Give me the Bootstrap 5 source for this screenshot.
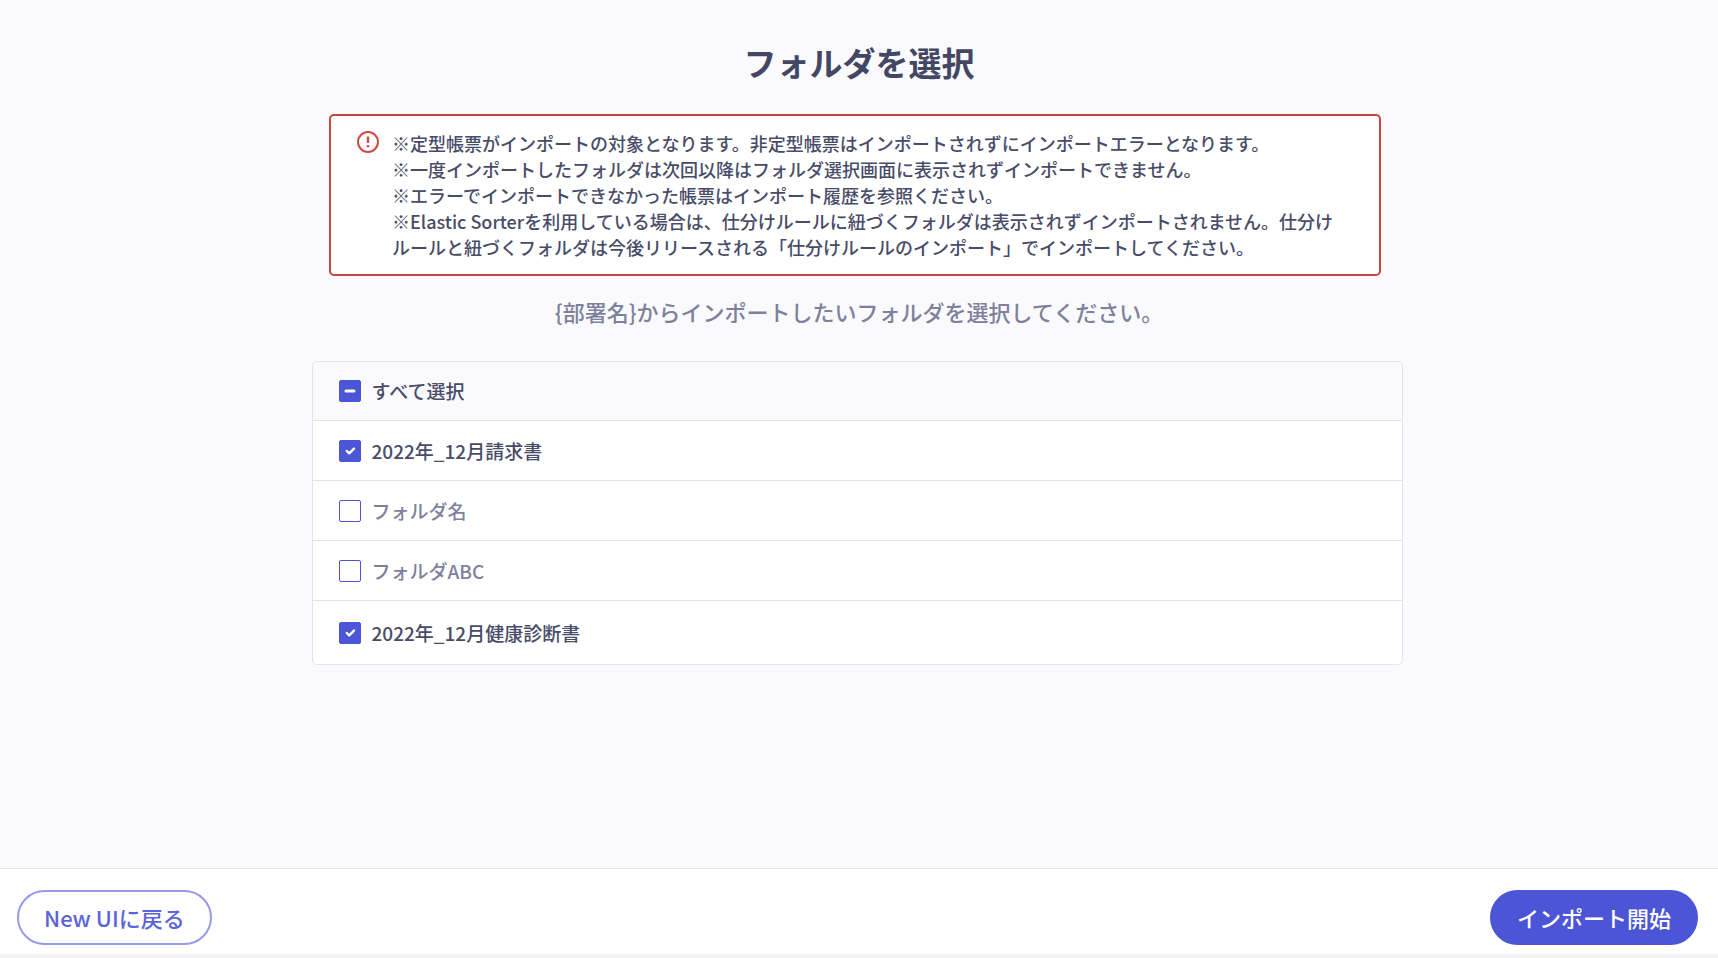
<!DOCTYPE html>
<html lang="ja">
<head>
<meta charset="utf-8">
<meta name="viewport" content="width=device-width, initial-scale=1">
<title>フォルダを選択</title>
<link rel="stylesheet" href="https://cdn.jsdelivr.net/npm/bootstrap@5.3.0/dist/css/bootstrap.min.css">
<style>
  :root { --ink: #484c68; --muted: #7e819b; --accent: #4b55d6; --line: #e2e3ed; --danger: #c94542; }
  body { font-family: "Noto Sans CJK JP", sans-serif; font-weight: 500; color: var(--ink); background: #fafafd; }
  .page-title { font-size: 33px; line-height: 48px; font-weight: 700; color: #434763; padding-top: 38px; margin-bottom: 28px; }
  .notice { max-width: 1052px; padding: 14px 22px 14px 26px; gap: 13px; border: 2px solid var(--danger); border-radius: 5px; font-size: 18px; line-height: 26px; }
  .notice svg { margin-top: 1px; }
  .guide { font-size: 22px; line-height: 32px; color: var(--muted); margin: 19px 0 34px; }
  .folders { max-width: 1091px; --bs-list-group-border-color: var(--line); --bs-list-group-border-radius: 5px; --bs-list-group-color: var(--ink); font-size: 19px; line-height: 28px; }
  .folders .list-group-item { min-height: 60px; padding: 0 26px; gap: 11px; }
  .folders .list-group-item:last-child { min-height: 64px; }
  .folders .select-all { background: #fafafd; }
  .folders .form-check-input { width: 22px; height: 22px; border: 1px solid var(--accent); border-radius: 2px; background-size: 16px; }
  .folders .form-check-input:checked, .folders .form-check-input:indeterminate { background-color: var(--accent); border-color: var(--accent); }
  .folders .form-check-input:indeterminate { background-size: 20px; }
  .folders .form-check-input:not(:checked):not(:indeterminate) + label { color: var(--muted); }
  .actions { background: #fff; border-top: 1px solid #e2e2f2; border-bottom: 4px solid #f1f1f1; padding: 21px 20px 9px 17px; }
  .actions .btn { height: 55px; padding: 0 25px; border-width: 2px; font-size: 22px; font-weight: 500; --bs-btn-color: #5b64da; --bs-btn-border-color: #959be9; --bs-btn-hover-bg: var(--accent); }
  .actions .btn-primary { --bs-btn-color: #fff; --bs-btn-bg: var(--accent); --bs-btn-border-color: var(--accent); }
</style>
</head>
<body class="min-vh-100 d-flex flex-column">
<main class="flex-grow-1 d-flex flex-column align-items-center">
  <h1 class="page-title text-center">フォルダを選択</h1>
  <section class="notice w-100 bg-white d-flex align-items-start me-2" role="alert">
    <svg class="flex-shrink-0" width="22" height="22" viewBox="0 0 22 22" fill="none" stroke="#d04a48" stroke-width="2" aria-hidden="true">
      <circle cx="11" cy="11" r="10"/><path d="M11 5.5v6.5M11 14v2.2" stroke-width="2.4"/>
    </svg>
    <div>
      <p class="mb-0">※定型帳票がインポートの対象となります。非定型帳票はインポートされずにインポートエラーとなります。</p>
      <p class="mb-0">※一度インポートしたフォルダは次回以降はフォルダ選択画面に表示されずインポートできません。</p>
      <p class="mb-0">※エラーでインポートできなかった帳票はインポート履歴を参照ください。</p>
      <p class="mb-0">※Elastic Sorterを利用している場合は、仕分けルールに紐づくフォルダは表示されずインポートされません。仕分け<br>ルールと紐づくフォルダは今後リリースされる「仕分けルールのインポート」でインポートしてください。</p>
    </div>
  </section>
  <p class="guide text-center">{部署名}からインポートしたいフォルダを選択してください。</p>
  <ul class="folders list-group w-100 me-1">
    <li class="list-group-item select-all d-flex align-items-center"><input class="form-check-input m-0" type="checkbox" id="all"><label for="all">すべて選択</label></li>
    <li class="list-group-item d-flex align-items-center"><input class="form-check-input m-0" type="checkbox" id="f1" checked><label for="f1">2022年_12月請求書</label></li>
    <li class="list-group-item d-flex align-items-center"><input class="form-check-input m-0" type="checkbox" id="f2"><label for="f2">フォルダ名</label></li>
    <li class="list-group-item d-flex align-items-center"><input class="form-check-input m-0" type="checkbox" id="f3"><label for="f3">フォルダABC</label></li>
    <li class="list-group-item d-flex align-items-center"><input class="form-check-input m-0" type="checkbox" id="f4" checked><label for="f4">2022年_12月健康診断書</label></li>
  </ul>
</main>
<footer class="actions d-flex justify-content-between">
  <button type="button" class="btn btn-outline-primary rounded-pill">New UIに戻る</button>
  <button type="button" class="btn btn-primary rounded-pill">インポート開始</button>
</footer>
<script src="https://cdn.jsdelivr.net/npm/bootstrap@5.3.0/dist/js/bootstrap.bundle.min.js"></script>
<script>
  const all = document.getElementById('all');
  const items = [...document.querySelectorAll('.folders input:not(#all)')];
  const sync = () => {
    const count = items.filter(i => i.checked).length;
    all.checked = count === items.length;
    all.indeterminate = count > 0 && count < items.length;
  };
  items.forEach(i => i.addEventListener('change', sync));
  all.addEventListener('change', () => { items.forEach(i => i.checked = all.checked); sync(); });
  sync();
</script>
</body>
</html>
